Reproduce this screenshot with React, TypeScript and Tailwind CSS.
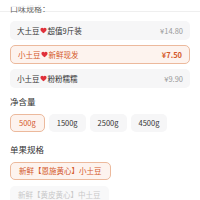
import React from "react";

const Heart = () => (
  <svg width="7" height="7" viewBox="0 0 24 24" className="inline-block mx-[0.5px] -mt-[1px] align-middle">
    <path d="M12 21.5C5.5 16.5 1.5 12.8 1.5 8.3 1.5 5 4 2.5 7.2 2.5c2 0 3.7 1 4.8 2.7C13.1 3.5 14.8 2.5 16.8 2.5 20 2.5 22.5 5 22.5 8.3c0 4.5-4 8.2-10.5 13.2z" fill="#e0303a" />
  </svg>
);

const font = { fontFamily: '"Noto Sans CJK SC", "Noto Sans", sans-serif' };

function Row({ a, b, price, sel }: { a: string; b: string; price: string; sel?: boolean }) {
  return (
    <div
      className={
        "h-[19px] rounded-[5px] flex items-center justify-between px-[7px] text-[7.5px] leading-none " +
        (sel ? "bg-[#fdf3ee] border border-[#ecb99c] text-[#d4582a]" : "bg-[#f6f6f7] text-[#333333]")
      }
    >
      <span className="flex items-center">
        {a}
        <Heart />
        {b}
      </span>
      <span className={sel ? "font-bold text-[#d4582a]" : "text-[#9a9a9a]"}>{price}</span>
    </div>
  );
}

function Chip({ t, sel, dis }: { t: string; sel?: boolean; dis?: boolean }) {
  return (
    <div
      className={
        "h-[18px] rounded-[5px] flex items-center px-[8px] text-[7.5px] leading-none " +
        (sel
          ? "bg-[#fdf3ee] border border-[#ecb99c] text-[#d4582a]"
          : dis
          ? "bg-[#f8f8f9] text-[#c9c9c9]"
          : "bg-[#f6f6f7] text-[#333333]")
      }
    >
      {t}
    </div>
  );
}

export default function App() {
  return (
    <div className="w-[200px] h-[200px] overflow-hidden bg-white" style={font}>
      <div className="relative h-[12px] border-b border-[#efefef]">
        <div className="absolute left-[10px] top-[5px] text-[8px] leading-[8px] text-[#666]">口味规格：</div>
        <div className="absolute left-0 top-0 w-full h-[7px] bg-white/85"></div>
      </div>
      <div className="px-[10px] mt-[9px] flex flex-col gap-[5px]">
        <Row a="大土豆" b="超值9斤装" price="¥14.80" />
        <Row a="小土豆" b="新鲜现发" price="¥7.50" sel />
        <Row a="小土豆" b="粉粉糯糯" price="¥9.90" />
      </div>
      <div className="px-[10px] mt-[8px] text-[8.5px] leading-[10px] text-[#333]">净含量</div>
      <div className="px-[10px] mt-[8px] flex gap-[4px]">
        <Chip t="500g" sel />
        <Chip t="1500g" />
        <Chip t="2500g" />
        <Chip t="4500g" />
      </div>
      <div className="px-[10px] mt-[12px] text-[8.5px] leading-[10px] text-[#333]">单果规格</div>
      <div className="px-[10px] mt-[8px] flex flex-col items-start gap-[6px]">
        <Chip t="新鲜【恩施黄心】小土豆" sel />
        <Chip t="新鲜【黄皮黄心】中土豆" dis />
      </div>
    </div>
  );
}
